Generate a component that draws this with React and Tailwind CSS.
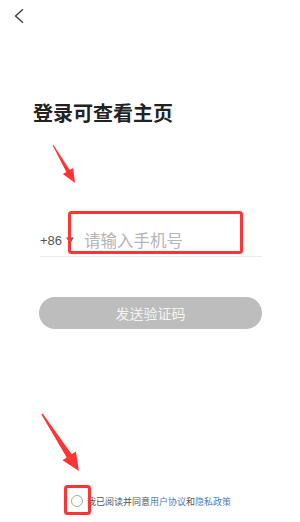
export default function App() {
  return (
    <div
      className="relative flex h-[522px] w-[300px] flex-col overflow-hidden bg-white"
      style={{ fontFamily: '"Noto Sans CJK SC", "Noto Sans", sans-serif' }}
    >
      <div className="pl-[14px] pt-[9px]">
        <svg width="10" height="14" viewBox="0 0 10 14" fill="none">
          <polyline points="8.5,0.8 1.5,7 8.5,13.2" stroke="#3b3b4b" strokeWidth="1.4" strokeLinecap="round" strokeLinejoin="round" />
        </svg>
      </div>

      <h1 className="mt-[76px] pl-[33px] text-[20px] font-bold leading-[28px] text-[#222]">登录可查看主页</h1>

      <div className="mx-[38px] ml-[40px] mt-[98px] flex h-[32px] items-center border-b border-[#ebebeb]">
        <span className="text-[13px] text-[#555]" style={{ fontFamily: '"Liberation Sans", Arial, sans-serif' }}>+86</span>
        <svg className="ml-[4px]" width="8" height="7" viewBox="0 0 8 7">
          <polygon points="0,0.5 8,0.5 4,6.5" fill="#666" />
        </svg>
        <input
          className="ml-[10px] w-[160px] bg-transparent text-[16.5px] text-[#333] outline-none placeholder:text-[#b5b5b5]"
          placeholder="请输入手机号"
        />
      </div>

      <button className="mx-[38px] ml-[39px] mt-[40px] h-[32px] rounded-full bg-[#bdbdbd] text-[14px] text-[#f4f4f4]">
        发送验证码
      </button>

      <div className="mt-[165px] flex h-[14px] items-center pl-[71px]">
        <span className="h-[12px] w-[12px] rounded-full border border-[#aaa]" />
        <span className="ml-[4px] text-[9px] leading-none text-[#555]">
          我已阅读并同意<span className="text-[#4a7fc4]">用户协议</span>和<span className="text-[#4a7fc4]">隐私政策</span>
        </span>
      </div>

      <svg className="pointer-events-none absolute inset-0" width="300" height="522" viewBox="0 0 300 522" fill="none">
        <polygon
          points="52.6,145.3 66.3,171.9 62.8,173.9 75,183 73.2,167.9 69.7,169.9 53.4,144.8"
          fill="#ff3535"
        />
        <polygon
          points="41.4,414.4 66.7,457.5 62.5,460.3 79,471 75.9,451.5 71.7,454.3 42.6,413.6"
          fill="#ff3535"
        />
        <rect x="69.5" y="212.5" width="172" height="40" rx="2" stroke="#ff3535" strokeWidth="3" />
        <rect x="65.5" y="486.5" width="24" height="27" rx="2" stroke="#ff3535" strokeWidth="3" />
      </svg>
    </div>
  );
}
